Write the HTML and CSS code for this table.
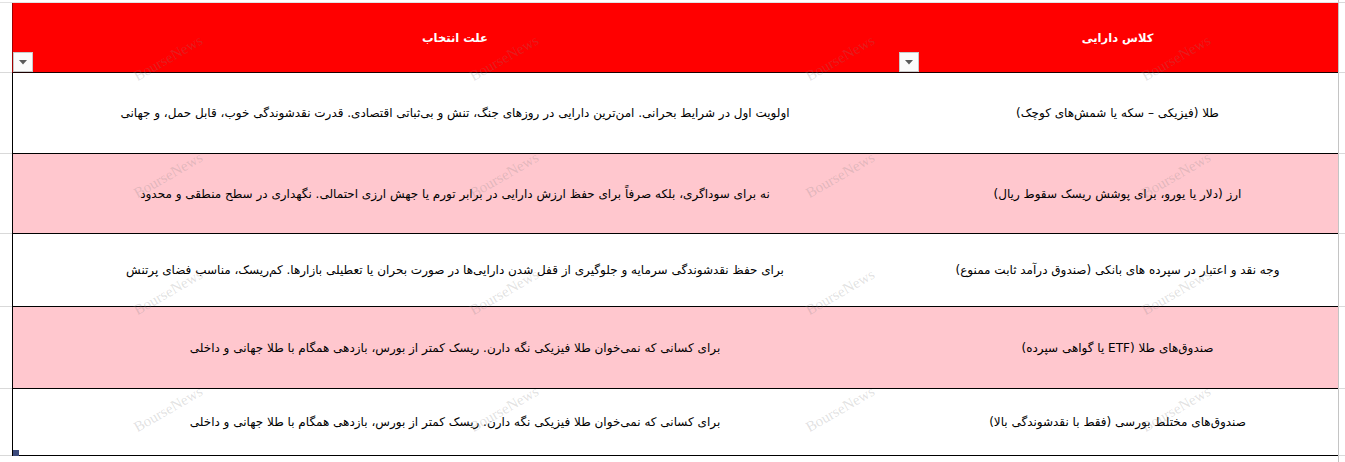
FILE: index.html
```html
<!DOCTYPE html>
<html lang="fa">
<head>
<meta charset="utf-8">
<title>Sheet</title>
<link rel="stylesheet" href="styles.css">
</head>
<body>
<div class="sheet">
  <div class="row top">
    <div class="gut"></div>
    <div class="topspan"></div>
    <div class="rgut"></div>
  </div>

  <div class="row head">
    <div class="gut"></div>
    <div class="cell h first">
      <span class="txt" dir="rtl">علت انتخاب</span>
      <div class="dd"><svg width="8" height="5" viewBox="0 0 8 5"><path d="M0 0H8L4 4.5Z" fill="#5a5a5a"/></svg></div>
    </div>
    <div class="cell h second">
      <span class="txt" dir="rtl">کلاس دارایی</span>
      <div class="dd"><svg width="8" height="5" viewBox="0 0 8 5"><path d="M0 0H8L4 4.5Z" fill="#5a5a5a"/></svg></div>
    </div>
    <div class="rgut"></div>
  </div>

  <div class="row r1">
    <div class="gut"></div>
    <div class="cell first"><span class="txt" dir="rtl">اولویت اول در شرایط بحرانی. امن‌ترین دارایی در روزهای جنگ، تنش و بی‌ثباتی اقتصادی. قدرت نقدشوندگی خوب، قابل حمل، و جهانی</span></div>
    <div class="cell second"><span class="txt" dir="rtl">طلا (فیزیکی – سکه یا شمش‌های کوچک)</span></div>
    <div class="rgut"></div>
  </div>

  <div class="row r2 pink">
    <div class="gut"></div>
    <div class="cell first"><span class="txt" dir="rtl">نه برای سوداگری، بلکه صرفاً برای حفظ ارزش دارایی در برابر تورم یا جهش ارزی احتمالی. نگهداری در سطح منطقی و محدود</span></div>
    <div class="cell second"><span class="txt" dir="rtl">ارز (دلار یا یورو، برای پوشش ریسک سقوط ریال)</span></div>
    <div class="rgut"></div>
  </div>

  <div class="row r3">
    <div class="gut"></div>
    <div class="cell first"><span class="txt" dir="rtl">برای حفظ نقدشوندگی سرمایه و جلوگیری از قفل شدن دارایی‌ها در صورت بحران یا تعطیلی بازارها. کم‌ریسک، مناسب فضای پرتنش</span></div>
    <div class="cell second"><span class="txt" dir="rtl">وجه نقد و اعتبار در سپرده های بانکی (صندوق درآمد ثابت ممنوع)</span></div>
    <div class="rgut"></div>
  </div>

  <div class="row r4 pink">
    <div class="gut"></div>
    <div class="cell first"><span class="txt" dir="rtl">برای کسانی که نمی‌خوان طلا فیزیکی نگه دارن. ریسک کمتر از بورس، بازدهی همگام با طلا جهانی و داخلی</span></div>
    <div class="cell second"><span class="txt" dir="rtl">صندوق‌های طلا (ETF یا گواهی سپرده)</span></div>
    <div class="rgut"></div>
  </div>

  <div class="row r5">
    <div class="gut"></div>
    <div class="cell first"><span class="txt" dir="rtl">برای کسانی که نمی‌خوان طلا فیزیکی نگه دارن. ریسک کمتر از بورس، بازدهی همگام با طلا جهانی و داخلی</span><div class="handle"></div></div>
    <div class="cell second"><span class="txt" dir="rtl">صندوق‌های مختلط بورسی (فقط با نقدشوندگی بالا)</span></div>
    <div class="rgut"></div>
  </div>

  <div class="row tail">
    <div class="gut"></div>
    <div class="topspan"></div>
    <div class="rgut"></div>
  </div>

  <div class="wm">
    <span>BourseNews</span><span>BourseNews</span><span>BourseNews</span><span>BourseNews</span>
    <span>BourseNews</span><span>BourseNews</span><span>BourseNews</span><span>BourseNews</span>
    <span>BourseNews</span><span>BourseNews</span><span>BourseNews</span><span>BourseNews</span>
    <span>BourseNews</span><span>BourseNews</span><span>BourseNews</span><span>BourseNews</span>
  </div>
</div>
</body>
</html>
```

FILE: styles.css
```css
* { box-sizing: border-box; }
html, body { margin: 0; padding: 0; background: #fff; }
body { width: 1345px; height: 462px; overflow: hidden; }

.sheet {
  position: relative;
  width: 1345px;
  height: 462px;
  font-family: "DejaVu Sans", "Liberation Sans", sans-serif;
  color: #000;
}

.row {
  display: grid;
  grid-template-columns: 12px 885px 441px 7px;
}

.gut { border-bottom: 1px solid #d9d9d9; }
.rgut { border-left: 1px solid #c4c4c4; border-bottom: 1px solid #d9d9d9; }

.top { height: 3px; }
.top .gut, .top .topspan { border-bottom: 1px solid #e2e2e2; }
.topspan { grid-column: 2 / 4; }
.tail { height: 6px; }
.tail .gut { border-bottom: none; }
.tail .rgut { border-bottom: none; }

.head { height: 70px; }
.r1 { height: 81px; }
.r2 { height: 80px; }
.r3 { height: 73px; }
.r4 { height: 82px; }
.r5 { height: 67px; }

.cell {
  position: relative;
  display: flex;
  align-items: center;
  justify-content: center;
  border-bottom: 1px solid #000;
  font-size: 12px;
}
.cell.first { border-left: 1px solid #000; }
.pink .cell { background: #ffc7ce; }

.cell.h {
  background: #ff0000;
  color: #fff;
  font-weight: bold;
  font-size: 11.5px;
  border-bottom: 1px solid #1a0000;
}
.cell.h.first { border-left: 1px solid #a00000; }

.txt { white-space: nowrap; }

.dd {
  position: absolute;
  bottom: 0;
  width: 20px;
  height: 20px;
  background: #fbfbfb;
  border: 1px solid #c9c9c9;
  display: flex;
  align-items: center;
  justify-content: center;
}
.cell.h.first .dd { left: 0; }
.cell.h.second .dd { left: 2px; }

.handle {
  position: absolute;
  left: 0;
  bottom: -1px;
  width: 6px;
  height: 6px;
  background: #3b4a7c;
}

.wm {
  position: absolute;
  left: 0;
  top: 0;
  width: 1344px;
  height: 468px;
  display: grid;
  grid-template-columns: repeat(4, 336px);
  grid-template-rows: repeat(4, 117px);
  pointer-events: none;
}
.wm span {
  justify-self: center;
  align-self: center;
  transform: rotate(-30deg);
  font-family: "Liberation Serif", serif;
  font-size: 15px;
  color: rgba(130, 130, 130, 0.24);
}
```
